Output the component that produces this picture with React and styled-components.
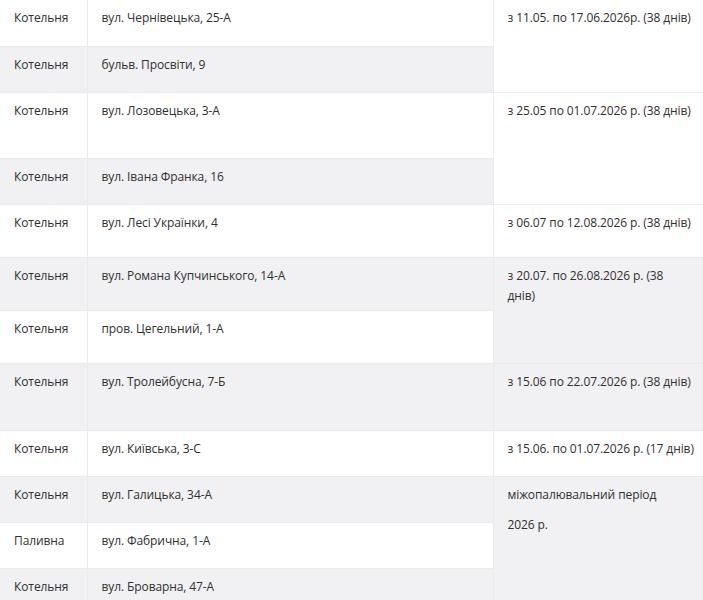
import React from "react";
import styled, { createGlobalStyle } from "styled-components";

const Global = createGlobalStyle`
  html, body { margin: 0; padding: 0; overflow: hidden; background: #fff; }
  body { font-family: "Open Sans", "Noto Sans", sans-serif; }
`;

const Page = styled.div`
  width: 703px;
  margin-top: -1px;
`;

const Table = styled.table`
  width: 703px;
  border-collapse: collapse;
  table-layout: fixed;
  font-size: 12px;
  letter-spacing: -0.1px;
  line-height: 20px;
  color: #303030;
`;

const Row = styled.tr`
  height: ${(p) => p.$h}px;
  background: ${(p) => (p.$alt ? "#f1f1f3" : "#ffffff")};
`;

const Cell = styled.td`
  border: 1px solid #ebebeb;
  padding: 8px 12px 8px 14px;
  vertical-align: top;
  white-space: nowrap;
  &:first-child { border-left: none; }
  &:last-child { border-right: none; }
`;

const Para = styled.p`
  margin: 0 0 10px;
  &:last-child { margin-bottom: 0; }
`;

const rows = [
  { h: 47, type: "Котельня", addr: "вул. Чернівецька, 25-А", period: { span: 2, lines: ["з 11.05. по 17.06.2026р. (38 днів)"] } },
  { h: 46, type: "Котельня", addr: "бульв. Просвіти, 9" },
  { h: 66, type: "Котельня", addr: "вул. Лозовецька, 3-А", period: { span: 2, lines: ["з 25.05 по 01.07.2026 р. (38 днів)"] } },
  { h: 46, type: "Котельня", addr: "вул. Івана Франка, 16" },
  { h: 53, type: "Котельня", addr: "вул. Лесі Українки, 4", period: { span: 1, lines: ["з 06.07 по 12.08.2026 р. (38 днів)"] } },
  { h: 53, type: "Котельня", addr: "вул. Романа Купчинського, 14-А", period: { span: 2, lines: ["з 20.07. по 26.08.2026 р. (38\nднів)"] } },
  { h: 53, type: "Котельня", addr: "пров. Цегельний, 1-А" },
  { h: 67, type: "Котельня", addr: "вул. Тролейбусна, 7-Б", period: { span: 1, lines: ["з 15.06 по 22.07.2026 р. (38 днів)"] } },
  { h: 46, type: "Котельня", addr: "вул. Київська, 3-С", period: { span: 1, lines: ["з 15.06. по 01.07.2026 р. (17 днів)"] } },
  { h: 46, type: "Котельня", addr: "вул. Галицька, 34-А", period: { span: 3, lines: ["міжопалювальний період", "2026 р."] } },
  { h: 46, type: "Паливна", addr: "вул. Фабрична, 1-А" },
  { h: 46, type: "Котельня", addr: "вул. Броварна, 47-А" },
];

const renderLines = (text) =>
  text.split("\n").map((t, i, arr) => (
    <React.Fragment key={i}>
      {t}
      {i < arr.length - 1 && <br />}
    </React.Fragment>
  ));

export default function App() {
  return (
    <Page>
      <Global />
      <Table>
        <colgroup>
          <col style={{ width: 87 }} />
          <col style={{ width: 406 }} />
          <col style={{ width: 210 }} />
        </colgroup>
        <tbody>
          {rows.map((r, i) => (
            <Row key={i} $h={r.h} $alt={i % 2 === 1}>
              <Cell>{r.type}</Cell>
              <Cell>{r.addr}</Cell>
              {r.period && (
                <Cell rowSpan={r.period.span}>
                  {r.period.lines.map((l, j) => (
                    <Para key={j}>{renderLines(l)}</Para>
                  ))}
                </Cell>
              )}
            </Row>
          ))}
        </tbody>
      </Table>
    </Page>
  );
}
